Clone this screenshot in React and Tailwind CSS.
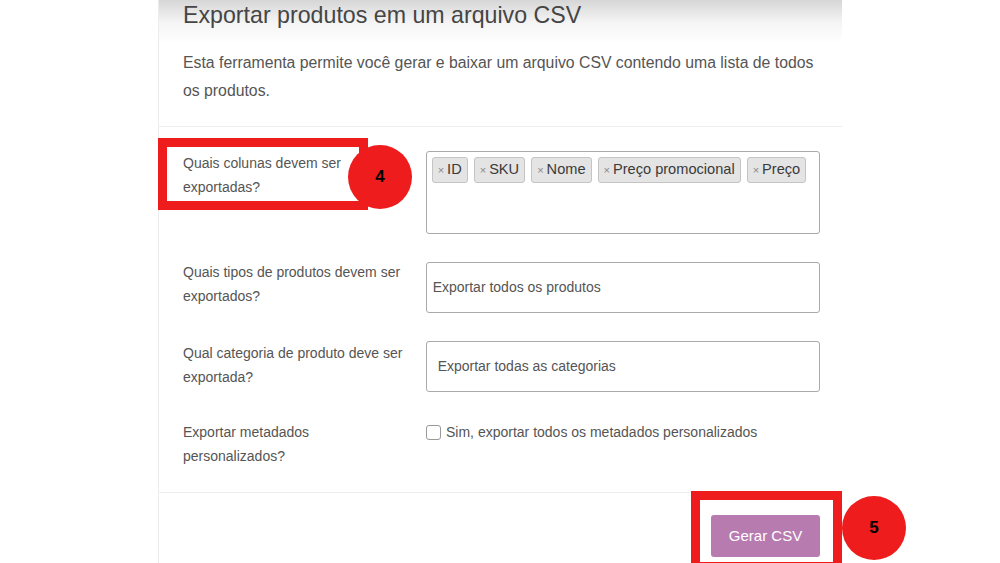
import { useState } from "react";

const tags = ["ID", "SKU", "Nome", "Preço promocional", "Preço"];

function Badge({ n }) {
  return (
    <div className="absolute w-[64px] h-[64px] rounded-full bg-[#ee1c1c] flex items-center justify-center text-[17px] font-bold text-black">
      {n}
    </div>
  );
}

export default function App() {
  const [meta, setMeta] = useState(false);

  return (
    <div className="relative w-[1000px] h-[563px] overflow-hidden bg-white font-['Liberation_Sans',Arial,sans-serif]">
      <div className="ml-[158px] w-[684px] h-full border-l border-[#ececec] bg-[linear-gradient(to_bottom,#d6d6d6_0px,#f4f4f4_22px,#fff_44px)]">
        {/* Header */}
        <div className="px-6 border-b border-[#eeeeee] h-[127px]">
          <h1 className="pt-[1px] text-[23.2px] leading-[28px] text-[#454545]">Exportar produtos em um arquivo CSV</h1>
          <p className="mt-[20px] text-[15.8px] leading-[28px] text-[#555]">
            Esta ferramenta permite você gerar e baixar um arquivo CSV contendo uma lista de todos os produtos.
          </p>
        </div>

        {/* Form */}
        <div className="pl-6 pr-[22px] pt-[24px] pb-[24px] flex flex-col gap-[28px] border-b border-[#eeeeee]">
          <div className="flex items-start">
            <div className="w-[243px] text-[14px] leading-[24px] text-[#555] pr-[60px]">Quais colunas devem ser exportadas?</div>
            <div className="w-[395px] h-[83px] border border-[#aaa] rounded-[3px] p-[5px] flex flex-wrap content-start gap-[6px]">
              {tags.map((t) => (
                <span key={t} className="h-[26px] px-[5px] flex items-center gap-[3px] bg-[#e4e4e4] border border-[#c4c4c4] rounded-[3px] text-[14.6px] text-[#3a3a3a]">
                  <span className="text-[11px] text-[#888]">×</span>
                  {t}
                </span>
              ))}
            </div>
          </div>

          <div className="flex items-start">
            <div className="w-[243px] text-[14px] leading-[24px] text-[#555] pr-[20px] -mt-[2px]">Quais tipos de produtos devem ser exportados?</div>
            <div className="w-[395px] h-[51px] border border-[#aaa] rounded-[3px] pl-[6px] flex items-center text-[14px] text-[#555]">
              Exportar todos os produtos
            </div>
          </div>

          <div className="flex items-start">
            <div className="w-[243px] text-[14px] leading-[24px] text-[#555] pr-[20px]">Qual categoria de produto deve ser exportada?</div>
            <div className="w-[395px] h-[51px] border border-[#aaa] rounded-[3px] pl-[11px] flex items-center text-[14px] text-[#555]">
              Exportar todas as categorias
            </div>
          </div>

          <div className="flex items-start">
            <div className="w-[243px] text-[14px] leading-[24px] text-[#555] pr-[80px]">Exportar metadados personalizados?</div>
            <label className="flex items-center gap-[5px] h-[24px] text-[14px] text-[#555]">
              <input
                type="checkbox"
                checked={meta}
                onChange={(e) => setMeta(e.target.checked)}
                className="appearance-none w-[15px] h-[15px] border border-[#999] rounded-[3px] bg-white"
              />
              Sim, exportar todos os metadados personalizados
            </label>
          </div>
        </div>

        {/* Footer */}
        <div className="flex justify-end pr-[22px] pt-[22px]">
          <button className="w-[109px] h-[42px] rounded-[3px] bg-[#b87bb0] text-white text-[15px]">Gerar CSV</button>
        </div>
      </div>

      {/* Annotations */}
      <div className="absolute left-[158px] top-[138px] w-[210px] h-[72px] border-[9px] border-[#ee1c1c]" />
      <div className="left-[348px] top-[145px] absolute">
        <Badge n="4" />
      </div>
      <div className="absolute left-[691px] top-[491px] w-[151px] h-[80px] border-[9px] border-[#ee1c1c]" />
      <div className="left-[842px] top-[496px] absolute">
        <Badge n="5" />
      </div>
    </div>
  );
}
